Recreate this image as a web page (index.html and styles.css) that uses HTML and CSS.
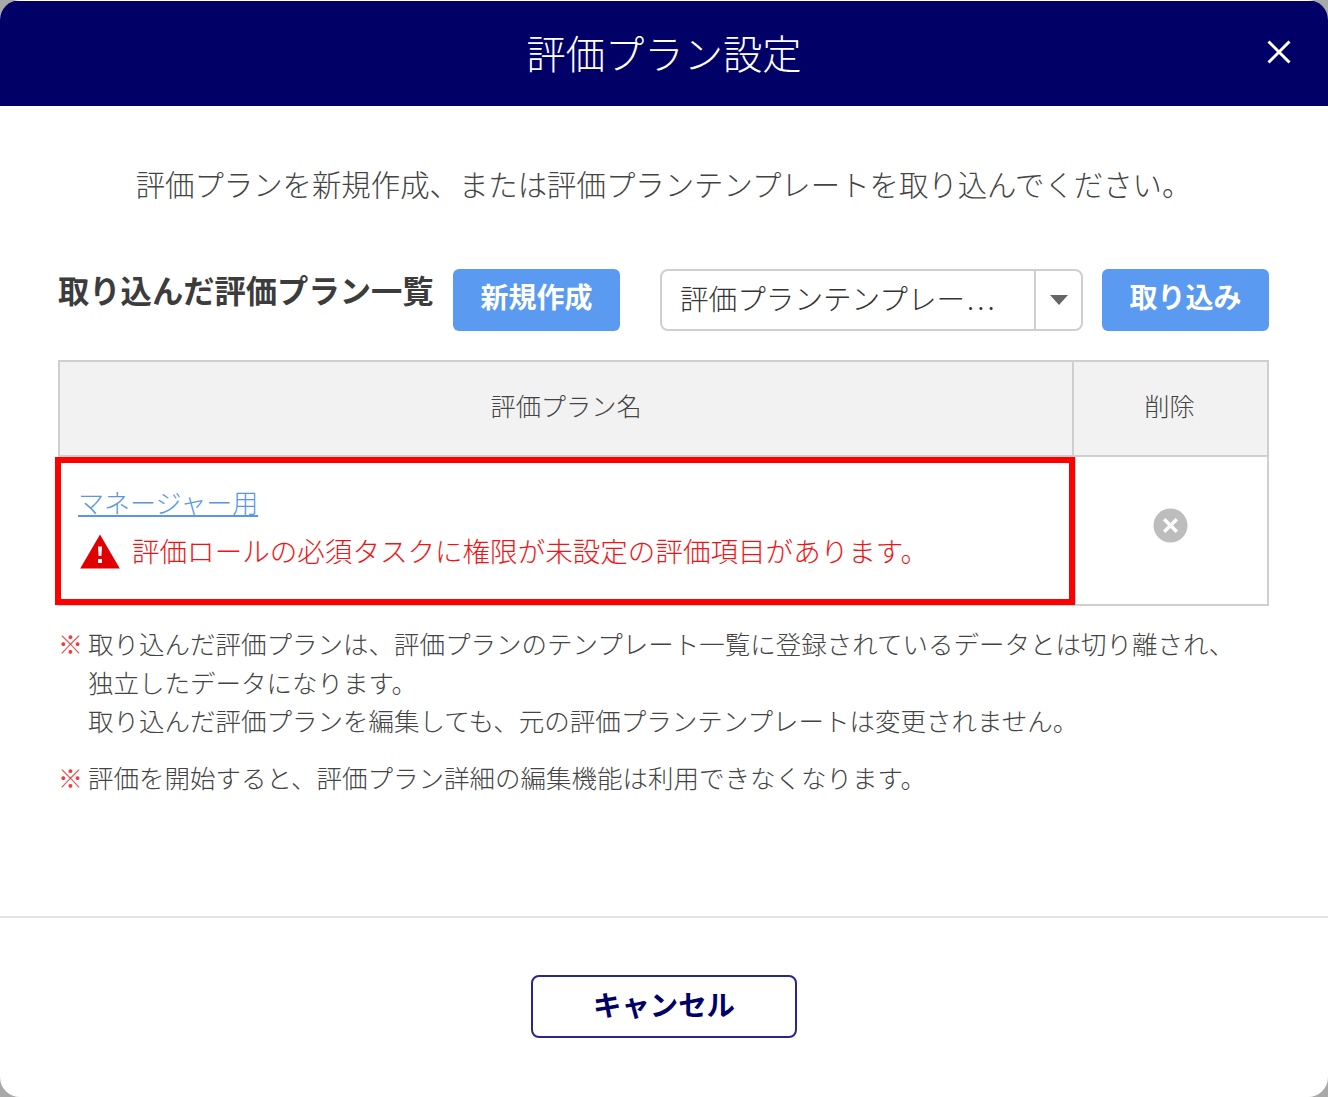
FILE: index.html
```html
<!DOCTYPE html>
<html lang="ja">
<head>
<meta charset="utf-8">
<title>評価プラン設定</title>
<link rel="stylesheet" href="styles.css">
</head>
<body>
<div class="modal">
  <header class="modal-header">
    <h1 class="modal-title">評価プラン設定</h1>
    <button class="close-btn" type="button" aria-label="閉じる">
      <svg class="close-icon" viewBox="0 0 24 24"><path d="M1.5 1.5 22.5 22.5M22.5 1.5 1.5 22.5"/></svg>
    </button>
  </header>
  <main class="modal-body">
    <p class="lead">評価プランを新規作成、または評価プランテンプレートを取り込んでください。</p>
    <div class="toolbar">
      <h2 class="section-title">取り込んだ評価プラン一覧</h2>
      <button class="btn-primary btn-new" type="button">新規作成</button>
      <div class="select">
        <span class="select-value">評価プランテンプレー<span class="ellipsis">...</span></span>
        <span class="select-arrow"><span class="caret"></span></span>
      </div>
      <button class="btn-primary btn-import" type="button">取り込み</button>
    </div>
    <div class="plan-table">
      <div class="cell head name-col">評価プラン名</div>
      <div class="cell head del-col">削除</div>
      <div class="cell name-cell">
        <a class="plan-link" href="#">マネージャー用</a>
        <div class="error-row">
          <svg class="warn-icon" viewBox="0 0 40 35"><path class="warn-tri" d="M20 .5 39.8 34.5H.2Z"/><path class="warn-mark" d="M18 12.5h4l-.6 9.5h-2.8ZM18 25h4v4h-4Z"/></svg>
          <span class="error-text">評価ロールの必須タスクに権限が未設定の評価項目があります。</span>
        </div>
        <div class="highlight"></div>
      </div>
      <div class="cell del-cell">
        <svg class="del-icon" viewBox="0 0 36 36"><circle cx="18" cy="18" r="17.5"/><path d="M11.5 11.5 24.5 24.5M24.5 11.5 11.5 24.5"/></svg>
      </div>
    </div>
    <div class="note">
      <span class="note-mark">※</span>
      <p class="note-text">取り込んだ評価プランは、評価プランのテンプレート一覧に登録されているデータとは切り離され、<br>独立したデータになります。<br>取り込んだ評価プランを編集しても、元の評価プランテンプレートは変更されません。</p>
    </div>
    <div class="note note-second">
      <span class="note-mark">※</span>
      <p class="note-text">評価を開始すると、評価プラン詳細の編集機能は利用できなくなります。</p>
    </div>
  </main>
  <footer class="modal-footer">
    <button class="btn-cancel" type="button">キャンセル</button>
  </footer>
</div>
</body>
</html>
```
FILE: styles.css
```css
* { box-sizing: border-box; }
html, body { margin: 0; padding: 0; height: 100%; }
body { background: #a9a9a9; font-family: "Noto Sans CJK JP", "Noto Sans", sans-serif; color: #444; overflow: hidden; }
button { font-family: inherit; cursor: pointer; }
.modal { width: 1328px; height: 1097px; background: #fff; border-radius: 20px; overflow: hidden; display: flex; flex-direction: column; padding-top: 1px; }
.modal-header { height: 105px; background: #000066; display: flex; align-items: center; justify-content: center; position: relative; border-radius: 14px 14px 0 0; flex: none; padding-bottom: 4px; }
.modal-title { margin: 0; color: #fff; font-size: 39.3px; font-weight: 300; line-height: 1; }
.close-btn { position: absolute; right: 37px; top: 39px; width: 24px; height: 24px; padding: 0; border: 0; background: none; display: flex; }
.close-icon { width: 24px; height: 24px; stroke: #fff; stroke-width: 3; fill: none; }
.modal-body { flex: 1; padding: 0 59px 0 58px; min-height: 0; }
.lead { margin: 57px 0 0; font-size: 29.4px; font-weight: 300; line-height: 40px; text-align: center; color: #444; white-space: nowrap; }
.toolbar { display: flex; align-items: flex-start; margin-top: 66px; height: 62px; }
.section-title { margin: 0; width: 395px; font-size: 31.3px; line-height: 42px; font-weight: 700; color: #3c3c3c; white-space: nowrap; }
.btn-primary { border: 0; border-radius: 6px; background: #5a9af0; color: #fff; font-size: 28px; font-weight: 700; height: 62px; line-height: 54px; padding: 0 0 8px; }
.btn-new { width: 167px; }
.btn-import { width: 167px; margin-left: 19px; }
.select { margin-left: 40px; width: 423px; height: 62px; display: flex; border: 2px solid #cfcfcf; border-radius: 8px; background: #fff; }
.select-value { flex: 1; padding-left: 18px; font-size: 28.6px; font-weight: 300; line-height: 54px; color: #333; white-space: nowrap; }
.ellipsis { letter-spacing: 3px; margin-left: 2px; }
.select-arrow { width: 47px; border-left: 2px solid #cfcfcf; display: flex; align-items: center; justify-content: center; }
.caret { width: 0; height: 0; border-left: 9px solid transparent; border-right: 9px solid transparent; border-top: 10px solid #666; }
.plan-table { display: grid; grid-template-columns: 1016px 195px; margin-top: 29px; width: 1211px; }
.cell { border: 2px solid #cfcfcf; }
.head { height: 97px; background: #f2f2f2; display: flex; align-items: center; justify-content: center; font-size: 25.2px; font-weight: 300; color: #444; padding-bottom: 8px; }
.del-col { border-left: 0; padding-right: 2px; }
.name-cell { position: relative; height: 149px; border-top: 0; border-right: 0; padding: 27px 0 0 18px; }
.del-cell { height: 149px; border-top: 0; display: flex; align-items: center; justify-content: center; padding: 0 3px 11px 0; }
.highlight { position: absolute; left: -5px; top: 0; width: 1020px; height: 148px; border: 6px solid #ff0000; pointer-events: none; }
.plan-link { display: inline-block; font-size: 26px; font-weight: 300; line-height: 36px; color: #5a96e6; text-decoration: underline; }
.error-row { display: flex; align-items: center; margin-top: 10px; }
.warn-icon { width: 40px; height: 35px; flex: none; margin-left: 2px; position: relative; top: 1px; }
.warn-tri { fill: #e00000; }
.warn-mark { fill: #fff; }
.error-text { margin-left: 12px; font-size: 27.55px; font-weight: 300; line-height: 40px; color: #f01414; white-space: nowrap; }
.del-icon { width: 35px; height: 35px; }
.del-icon circle { fill: #bdbdbd; }
.del-icon path { stroke: #fff; stroke-width: 3.5; fill: none; }
.note { display: flex; align-items: flex-start; font-size: 25.5px; font-weight: 300; line-height: 38.5px; margin-top: 18px; }
.note-second { margin-top: 18px; }
.note-mark { color: #f03c3c; width: 30px; flex: none; font-size: 25px; font-weight: 400; }
.note-text { margin: 0; white-space: nowrap; color: #444; }
.modal-footer { flex: none; height: 181px; border-top: 2px solid #e4e4e4; display: flex; justify-content: center; padding-top: 57px; }
.btn-cancel { width: 266px; height: 63px; border: 2px solid #28288c; border-radius: 8px; background: #fff; color: #000066; font-size: 28.4px; font-weight: 700; padding: 0 0 6px; }
```
